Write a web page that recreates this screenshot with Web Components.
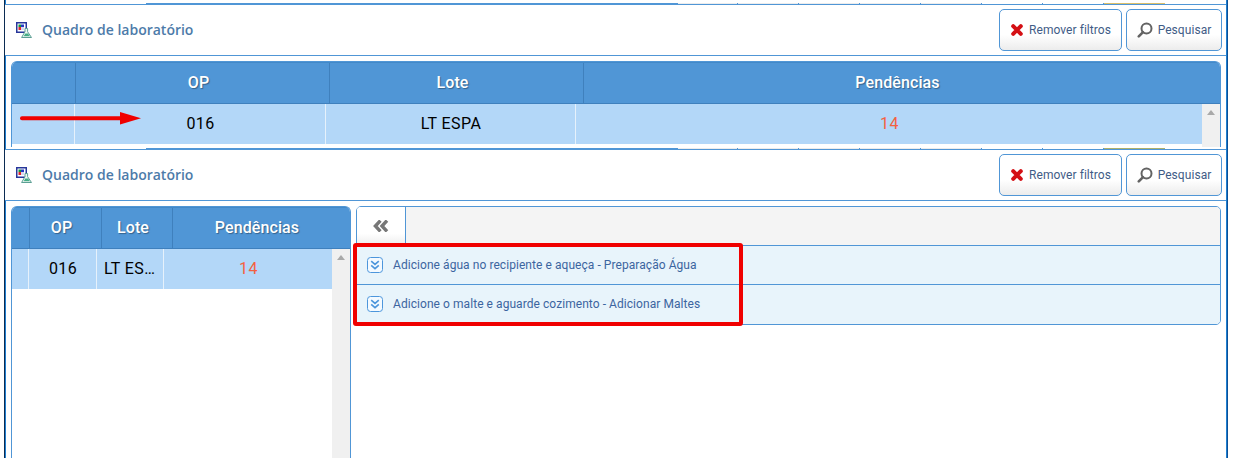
<!DOCTYPE html>
<html lang="pt-BR">
<head>
<meta charset="utf-8">
<title>Quadro de laboratório</title>
<style>
  html, body { margin: 0; padding: 0; background: #fff; }
  body { font-family: Roboto, "Liberation Sans", sans-serif; height: 471px; overflow: hidden; }
</style>
</head>
<body>
<lab-frame>
  <lab-panel style="--panel-h:147px;--strip-h:3px;--olive:#dcc06a">
    <lab-grid head-cols="64px 254px 254px 1fr" body-cols="63px 251px 250px 1fr" scroll="18"
      op="016" lote="LT ESPA" pend="14"></lab-grid>
    <red-arrow></red-arrow>
  </lab-panel>
  <lab-panel style="--panel-h:311px;--strip-h:1px;--olive:#aeb06a">
    <div style="display:flex;gap:5px;height:100%">
      <lab-grid style="width:340px;flex:none" head-cols="18px 72px 71px 1fr" body-cols="17px 68px 67px 1fr" scroll="18"
        op="016" lote="LT ESPA" pend="14"></lab-grid>
      <lab-tasks style="width:865px;flex:none">
        <task-row>Adicione água no recipiente e aqueça - Preparação Água</task-row>
        <task-row>Adicione o malte e aguarde cozimento - Adicionar Maltes</task-row>
      </lab-tasks>
    </div>
    <red-box></red-box>
  </lab-panel>
</lab-frame>

<script>
class LabFrame extends HTMLElement {
  constructor() {
    super();
    this.attachShadow({ mode: "open" });
    this.shadowRoot.innerHTML = `
      <style>
        :host {
          display: block;
          box-sizing: border-box;
          margin-left: 4px;
          width: 1224px;
          height: 458px;
          overflow: hidden;
          border-left: 1px solid #0b2b52;
          border-right: 1px solid #0b4f96;
        }
        div {
          box-sizing: border-box;
          height: 100%;
          border-left: 1px solid #1f7fd0;
          border-right: 1px solid #1f7fd0;
        }
      </style>
      <div><slot></slot></div>`;
  }
}
customElements.define("lab-frame", LabFrame);

class LabPanel extends HTMLElement {
  constructor() {
    super();
    this.attachShadow({ mode: "open" });
    this.shadowRoot.innerHTML = `
      <style>
        :host {
          display: block;
          position: relative;
          height: var(--panel-h);
          overflow: hidden;
          margin-left: -1px;
        }
        .strip { height: var(--strip-h); }
        /* resto da tela de tras: linha com as marcas das colunas */
        .line {
          display: grid;
          grid-template-columns: 141px 532px 60px 61px 61px 61px 61px 61px 61px 61px 1fr;
          height: 2px;
        }
        .line i { box-sizing: border-box; border-bottom: 1px solid #5096d6; }
        .line i:nth-child(2) { background: #5096d6; }
        .line i:nth-child(n+3):nth-child(-n+7) { background: #ececec; border-right: 1px solid #5096d6; }
        .line i:nth-child(8), .line i:nth-child(9) { border-right: 1px solid #5096d6; }
        .line i:nth-child(10) { background: var(--olive); }
        header {
          display: flex;
          align-items: center;
          height: 50px;
          padding: 0 4px 0 11px;
          border-bottom: 1px solid #5096d6;
          background: #fff;
        }
        h1 {
          flex: 1;
          margin: -2px 0 0 10px;
          font: 600 14px "Open Sans", "Noto Sans", sans-serif;
          color: #4d7ba9;
        }
        header svg.logo { width: 16px; height: 16px; flex: none; }
        .btns { display: flex; gap: 4px; }
        .body { height: calc(var(--panel-h) - var(--strip-h) - 53px); padding: 5px 5px 0 6px; box-sizing: border-box; }
      </style>
      <div class="strip"></div>
      <div class="line"><i></i><i></i><i></i><i></i><i></i><i></i><i></i><i></i><i></i><i></i><i></i></div>
      <header>
        <svg class="logo" viewBox="0 0 16 16">
          <rect x="0.75" y="0.75" width="9.5" height="9.5" fill="#fff" stroke="#27369a" stroke-width="1.5"/>
          <rect x="2.5" y="2.5" width="2.5" height="2.5" fill="#129a3c"/>
          <rect x="5" y="2.5" width="3" height="2.5" fill="#2438c8"/>
          <rect x="2.5" y="5" width="2.5" height="3" fill="#e0222a"/>
          <rect x="5" y="5" width="3" height="3" fill="#d8d8ee"/>
          <path d="M9 6.5h2.6v3.2l3.9 5.8H5.6l3.4-5.8z" fill="#eef7f3" stroke="#5c9f94"/>
          <path d="M7.6 14.2l1.8-2.8h2.6l1.9 2.8z" fill="#45ad86"/>
        </svg>
        <h1>Quadro de laboratório</h1>
        <div class="btns">
          <lab-button style="width:123px" icon="x">Remover filtros</lab-button>
          <lab-button style="width:96px" icon="search">Pesquisar</lab-button>
        </div>
      </header>
      <div class="body"><slot></slot></div>`;
  }
}
customElements.define("lab-panel", LabPanel);

class LabButton extends HTMLElement {
  constructor() {
    super();
    this.attachShadow({ mode: "open" });
  }
  connectedCallback() {
    const icones = {
      x: `<svg width="14" height="14" viewBox="0 0 14 14"><path d="M3.2 3.2L10.8 10.8M10.8 3.2L3.2 10.8" stroke="#d40f14" stroke-width="4" stroke-linecap="round"/></svg>`,
      search: `<svg width="16" height="16" viewBox="0 0 16 16"><circle cx="9.5" cy="6.5" r="5" fill="none" stroke="#636363" stroke-width="2"/><path d="M6 10.2L1.8 14.4" stroke="#636363" stroke-width="2.6" stroke-linecap="round"/></svg>`,
    };
    this.shadowRoot.innerHTML = `
      <style>
        :host {
          display: flex;
          box-sizing: border-box;
          height: 42px;
          align-items: center;
          justify-content: center;
          gap: 5px;
          border: 1px solid #5096d6;
          border-radius: 5px;
          background: linear-gradient(#fff 0, #fff 62%, #ececec 100%);
          font: 400 12px Roboto, "Liberation Sans", sans-serif;
          letter-spacing: .06px;
          color: #3f5c86;
        }
        svg { flex: none; }
      </style>
      ${icones[this.getAttribute("icon")]}<slot></slot>`;
  }
}
customElements.define("lab-button", LabButton);

class LabGrid extends HTMLElement {
  constructor() {
    super();
    this.attachShadow({ mode: "open" });
  }
  connectedCallback() {
    const scroll = this.getAttribute("scroll");
    this.shadowRoot.innerHTML = `
      <style>
        :host {
          display: block;
          box-sizing: border-box;
          height: 100%;
          border: 1px solid #5096d6;
          border-bottom: 0;
          border-radius: 6px 6px 0 0;
          overflow: hidden;
          position: relative;
        }
        .head {
          display: grid;
          grid-template-columns: ${this.getAttribute("head-cols")};
          height: 40px;
          background: #5096d6;
          border-bottom: 1px solid #3f80bd;
          border-top: 1px solid #4389c8;
        }
        .head div {
          display: flex;
          align-items: center;
          justify-content: center;
          box-sizing: border-box;
          padding: 0 9px 2px 0;
          border-left: 1px solid #3f80bd;
          font: 500 16px Roboto, "Liberation Sans", sans-serif;
          letter-spacing: .1px;
          color: #fff;
          text-shadow: 1px 1px 1px rgba(0,0,0,.35);
          margin-left: -1px;
        }
        .head div:first-child { border-left: 0; margin-left: 0; }
        .body { display: flex; height: calc(100% - 42px); }
        .rows { flex: 1; min-width: 0; }
        .row {
          display: grid;
          grid-template-columns: ${this.getAttribute("body-cols")};
          height: 40px;
          background: #b3d7f8;
        }
        .row div {
          box-sizing: border-box;
          border-right: 1px solid #e6f1fb;
          font: 400 16px/40px Roboto, "Liberation Sans", sans-serif;
          letter-spacing: .4px;
          color: #000;
          text-align: center;
          white-space: nowrap;
          overflow: hidden;
          text-overflow: ellipsis;
          padding: 0 6px 0 7px;
        }
        .row div:last-child { border-right: 0; color: #f4613f; }
        .scroll { width: ${scroll}px; flex: none; background: #f0f0f0; position: relative; }
        .scroll::before {
          content: "";
          position: absolute;
          left: 5px;
          top: 6px;
          border: 4px solid transparent;
          border-top: 0;
          border-bottom: 5px solid #a9a9a9;
        }
      </style>
      <div class="head"><div></div><div>OP</div><div>Lote</div><div>Pendências</div></div>
      <div class="body">
        <div class="rows"><div class="row">
          <div></div>
          <div>${this.getAttribute("op")}</div>
          <div>${this.getAttribute("lote")}</div>
          <div>${this.getAttribute("pend")}</div>
        </div></div>
        <div class="scroll"></div>
      </div>`;
  }
}
customElements.define("lab-grid", LabGrid);

class LabTasks extends HTMLElement {
  constructor() {
    super();
    this.attachShadow({ mode: "open" });
    this.shadowRoot.innerHTML = `
      <style>
        :host {
          display: block;
          box-sizing: border-box;
          height: 119px;
          border: 1px solid #5096d6;
          border-radius: 5px;
          overflow: hidden;
        }
        .tabs { display: flex; height: 38px; background: #f4f4f4; border-bottom: 1px solid #5096d6; }
        .tab {
          box-sizing: border-box;
          width: 49px;
          height: 38px;
          display: flex;
          align-items: center;
          justify-content: center;
          border-right: 1px solid #5096d6;
          background: linear-gradient(#fff 0, #fff 70%, #eee 100%);
        }
      </style>
      <div class="tabs"><div class="tab">
        <svg width="16" height="12" viewBox="0 0 16 12" fill="none"><path d="M7.4 .6L2.4 6l5 5.4M14 .6L9 6l5 5.4" stroke="#777" stroke-width="3.4"/></svg>
      </div></div>
      <slot></slot>`;
  }
}
customElements.define("lab-tasks", LabTasks);

class TaskRow extends HTMLElement {
  constructor() {
    super();
    this.attachShadow({ mode: "open" });
    this.shadowRoot.innerHTML = `
      <style>
        :host {
          display: flex;
          box-sizing: border-box;
          height: 39px;
          align-items: center;
          gap: 10px;
          padding-left: 10px;
          background: #e8f4fb;
          border-bottom: 1px solid #5096d6;
          font: 400 12px Roboto, "Liberation Sans", sans-serif;
          letter-spacing: .06px;
          color: #3c65a0;
        }
        :host(:last-child) { border-bottom-color: transparent; }
        svg { flex: none; }
      </style>
      <svg width="16" height="16" viewBox="0 0 16 16" fill="none">
        <rect x=".5" y=".5" width="15" height="15" rx="3" fill="#f4faff" stroke="#4d96dc"/>
        <path d="M4.2 4.2L8 7.4l3.8-3.2M4.2 8.4L8 11.6l3.8-3.2" stroke="#4d96dc" stroke-width="1.7"/>
      </svg>
      <span><slot></slot></span>`;
  }
}
customElements.define("task-row", TaskRow);

// anotacoes vermelhas por cima do print
class RedArrow extends HTMLElement {
  constructor() {
    super();
    this.attachShadow({ mode: "open" });
    this.shadowRoot.innerHTML = `
      <style>:host { position: absolute; left: 15px; top: 110px; width: 122px; height: 16px; }</style>
      <svg width="122" height="16" viewBox="0 0 122 16">
        <path d="M2 8.2H102" stroke="#f00000" stroke-width="4" stroke-linecap="round"/>
        <path d="M100 2L121 8.2 100 14.4z" fill="#f00000"/>
      </svg>`;
  }
}
customElements.define("red-arrow", RedArrow);

class RedBox extends HTMLElement {
  constructor() {
    super();
    this.attachShadow({ mode: "open" });
    this.shadowRoot.innerHTML = `
      <style>
        :host {
          position: absolute;
          left: 348px;
          top: 96px;
          width: 390px;
          height: 83px;
          box-sizing: border-box;
          border: 4px solid #f00000;
          border-radius: 3px;
        }
      </style>`;
  }
}
customElements.define("red-box", RedBox);
</script>
</body>
</html>
